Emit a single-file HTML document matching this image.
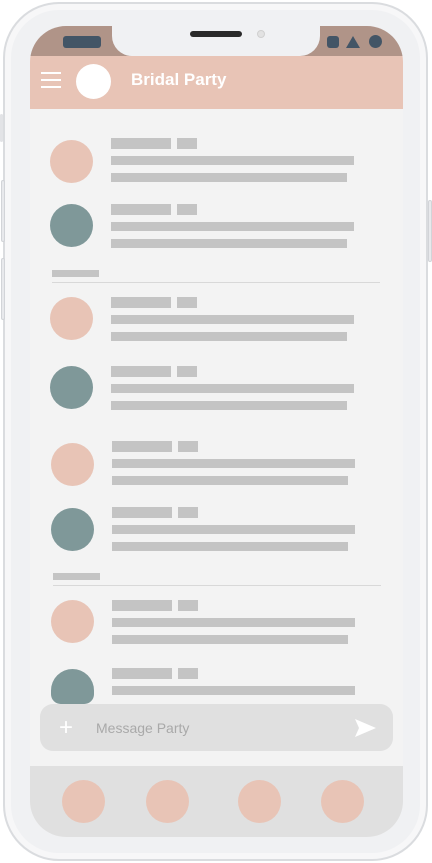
<!DOCTYPE html>
<html><head><meta charset="utf-8"><style>
*{margin:0;padding:0;box-sizing:border-box}
body{width:432px;height:863px;background:#fff;position:relative;overflow:hidden;font-family:"Liberation Sans",sans-serif}
.a{position:absolute}
.phone{left:3px;top:2px;width:425px;height:859px;border-radius:56px;background:#f0f1f3;border:2px solid #dadcdf;box-shadow:inset 0 0 0 6px #f7f7f8}
.screen{left:30px;top:26px;width:373px;height:811px;border-radius:36px;background:#f3f3f3;overflow:hidden}
.bar{background:#c4c4c4;position:absolute}
.av{position:absolute;width:43px;height:43px;border-radius:50%}
.p{background:#e8c4b6}.g{background:#7f9899}
</style></head><body>
<div class="a phone"></div>
<div class="a" style="left:0;top:114px;width:3px;height:28px;background:#e2e3e6;border-radius:2px"></div>
<div class="a" style="left:1px;top:180px;width:4px;height:62px;background:#e8e9ec;border:1px solid #d2d4d8;border-radius:2px"></div>
<div class="a" style="left:1px;top:258px;width:4px;height:62px;background:#e8e9ec;border:1px solid #d2d4d8;border-radius:2px"></div>
<div class="a" style="left:428px;top:200px;width:4px;height:62px;background:#e8e9ec;border:1px solid #d2d4d8;border-radius:2px"></div>
<div class="a screen">
  <div class="a" style="left:0;top:0;width:373px;height:30px;background:#b09488"></div>
  <div class="a" style="left:82px;top:-2px;width:208px;height:32px;background:#f0f1f3;border-radius:0 0 20px 20px"></div>
  <div class="a" style="left:33px;top:10px;width:38px;height:12px;background:#435566;border-radius:3px"></div>
  <div class="a" style="left:297px;top:10px;width:12px;height:12px;background:#435566;border-radius:3px"></div>
  <div class="a" style="left:316px;top:10px;width:0;height:0;border-left:7px solid transparent;border-right:7px solid transparent;border-bottom:12px solid #435566"></div>
  <div class="a" style="left:339px;top:9px;width:13px;height:13px;background:#435566;border-radius:50%"></div>
  <div class="a" style="left:0;top:30px;width:373px;height:53px;background:#e8c4b6"></div>
  <div class="a" style="left:11px;top:46px;width:20px;height:2px;background:#fff"></div>
  <div class="a" style="left:11px;top:53px;width:20px;height:2px;background:#fff"></div>
  <div class="a" style="left:11px;top:60px;width:20px;height:2px;background:#fff"></div>
  <div class="a" style="left:46px;top:38px;width:35px;height:35px;background:#fff;border-radius:50%"></div>
  <div class="a" style="left:101px;top:44px;color:#fff;font-weight:bold;font-size:17px">Bridal Party</div>
</div>
<div id="rows"></div>
<!-- rows -->
<div class="av p" style="left:50px;top:140px"></div>
<div class="bar" style="left:111px;top:138px;width:60px;height:11px"></div><div class="bar" style="left:177px;top:138px;width:20px;height:11px"></div>
<div class="bar" style="left:111px;top:156px;width:243px;height:9px"></div><div class="bar" style="left:111px;top:173px;width:236px;height:9px"></div>

<div class="av g" style="left:50px;top:204px"></div>
<div class="bar" style="left:111px;top:204px;width:60px;height:11px"></div><div class="bar" style="left:177px;top:204px;width:20px;height:11px"></div>
<div class="bar" style="left:111px;top:222px;width:243px;height:9px"></div><div class="bar" style="left:111px;top:239px;width:236px;height:9px"></div>

<div class="bar" style="left:52px;top:270px;width:47px;height:7px"></div>
<div class="a" style="left:52px;top:282px;width:328px;height:1px;background:#d8d8d8"></div>

<div class="av p" style="left:50px;top:297px"></div>
<div class="bar" style="left:111px;top:297px;width:60px;height:11px"></div><div class="bar" style="left:177px;top:297px;width:20px;height:11px"></div>
<div class="bar" style="left:111px;top:315px;width:243px;height:9px"></div><div class="bar" style="left:111px;top:332px;width:236px;height:9px"></div>

<div class="av g" style="left:50px;top:366px"></div>
<div class="bar" style="left:111px;top:366px;width:60px;height:11px"></div><div class="bar" style="left:177px;top:366px;width:20px;height:11px"></div>
<div class="bar" style="left:111px;top:384px;width:243px;height:9px"></div><div class="bar" style="left:111px;top:401px;width:236px;height:9px"></div>

<div class="av p" style="left:51px;top:443px"></div>
<div class="bar" style="left:112px;top:441px;width:60px;height:11px"></div><div class="bar" style="left:178px;top:441px;width:20px;height:11px"></div>
<div class="bar" style="left:112px;top:459px;width:243px;height:9px"></div><div class="bar" style="left:112px;top:476px;width:236px;height:9px"></div>

<div class="av g" style="left:51px;top:508px"></div>
<div class="bar" style="left:112px;top:507px;width:60px;height:11px"></div><div class="bar" style="left:178px;top:507px;width:20px;height:11px"></div>
<div class="bar" style="left:112px;top:525px;width:243px;height:9px"></div><div class="bar" style="left:112px;top:542px;width:236px;height:9px"></div>

<div class="bar" style="left:53px;top:573px;width:47px;height:7px"></div>
<div class="a" style="left:53px;top:585px;width:328px;height:1px;background:#d8d8d8"></div>

<div class="av p" style="left:51px;top:600px"></div>
<div class="bar" style="left:112px;top:600px;width:60px;height:11px"></div><div class="bar" style="left:178px;top:600px;width:20px;height:11px"></div>
<div class="bar" style="left:112px;top:618px;width:243px;height:9px"></div><div class="bar" style="left:112px;top:635px;width:236px;height:9px"></div>

<div class="av g" style="left:51px;top:669px;height:35px;border-radius:22px 22px 10px 10px"></div>
<div class="bar" style="left:112px;top:668px;width:60px;height:11px"></div><div class="bar" style="left:178px;top:668px;width:20px;height:11px"></div>
<div class="bar" style="left:112px;top:686px;width:243px;height:9px"></div>

<!-- input -->
<div class="a" style="left:40px;top:704px;width:353px;height:47px;background:#e0e0e0;border-radius:13px"></div>
<div class="a" style="left:59px;top:714px;color:#fff;font-size:24px;font-weight:300">+</div>
<div class="a" style="left:96px;top:720px;color:#a9a9a9;font-size:14px">Message Party</div>
<svg class="a" style="left:355px;top:719px" width="21" height="18"><path d="M0 0 L21 9 L0 18 L4 9 Z" fill="#fff"/></svg>

<!-- bottom nav -->
<div class="a" style="left:30px;top:766px;width:373px;height:71px;background:#e0e0e0;border-radius:0 0 36px 36px"></div>
<div class="av p" style="left:62px;top:780px"></div>
<div class="av p" style="left:146px;top:780px"></div>
<div class="av p" style="left:238px;top:780px"></div>
<div class="av p" style="left:321px;top:780px"></div>
<div class="a" style="left:190px;top:31px;width:52px;height:6px;background:#2a2a2a;border-radius:3px"></div>
<div class="a" style="left:257px;top:30px;width:8px;height:8px;background:#e2e2e2;border-radius:50%;border:1px solid #d0d0d0"></div>
</body></html>
